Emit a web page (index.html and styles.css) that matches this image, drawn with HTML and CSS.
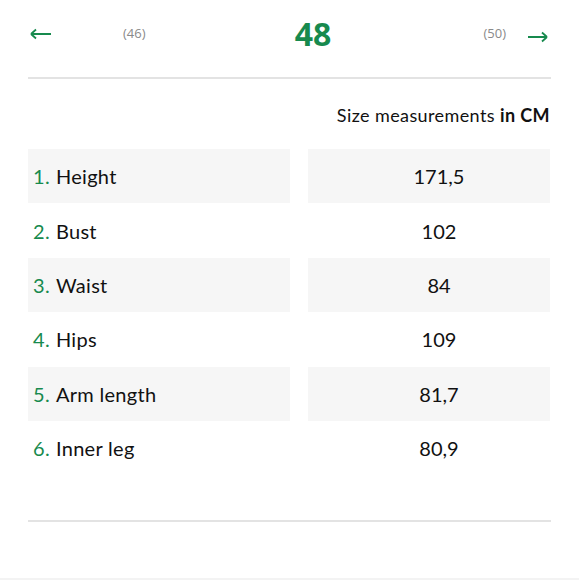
FILE: index.html
```html
<!DOCTYPE html>
<html>
<head>
<meta charset="utf-8">
<link rel="stylesheet" href="styles.css">
</head>
<body>
<div class="page">
  <div class="nav">
    <div class="side">
      <svg class="arrow" width="21" height="12" viewBox="0 0 21 12"><path d="M1 6H21M1 6L6 1.5M1 6L6 10.5" fill="none" stroke="#178a4e" stroke-width="1.8"/></svg>
      <span class="alt">(46)</span>
    </div>
    <div class="current">48</div>
    <div class="side">
      <span class="alt">(50)</span>
      <svg class="arrow right" width="20" height="12" viewBox="0 0 20 12"><path d="M0 6H19M19 6L14 1.5M19 6L14 10.5" fill="none" stroke="#178a4e" stroke-width="1.8"/></svg>
    </div>
  </div>
  <div class="rule"></div>
  <p class="caption">Size measurements <b>in CM</b></p>
  <div class="table">
    <div class="row shaded"><div class="label"><span class="num">1.</span> Height</div><div class="value">171,5</div></div>
    <div class="row"><div class="label"><span class="num">2.</span> Bust</div><div class="value">102</div></div>
    <div class="row shaded"><div class="label"><span class="num">3.</span> Waist</div><div class="value">84</div></div>
    <div class="row"><div class="label"><span class="num">4.</span> Hips</div><div class="value">109</div></div>
    <div class="row shaded"><div class="label"><span class="num">5.</span> Arm length</div><div class="value">81,7</div></div>
    <div class="row"><div class="label"><span class="num">6.</span> Inner leg</div><div class="value">80,9</div></div>
  </div>
  <div class="rule bottom"></div>
</div>
</body>
</html>
```
FILE: styles.css
```css
html, body {
  margin: 0;
  background: #fff;
}
body {
  font-family: "Lato", "Open Sans", sans-serif;
  color: #111;
  height: 580px;
  box-sizing: border-box;
  border-bottom: 2px solid #f3f3f3;
}
.page {
  padding: 0 28px 0 28px;
}
.nav {
  height: 77px;
  box-sizing: border-box;
  padding: 0 3px 9px 2px;
  display: flex;
  align-items: center;
  justify-content: space-between;
}
.side {
  display: flex;
  align-items: center;
  gap: 72px;
  width: 120px;
}
.side:last-child {
  justify-content: flex-end;
  gap: 22px;
}
.arrow { display: block; }
.arrow.right { margin-top: 6px; }
.alt {
  font-family: "Open Sans", sans-serif;
  font-size: 13px;
  line-height: 1;
  color: #8a8a8a;
  margin-top: -2px;
}
.current {
  font-family: "Open Sans", sans-serif;
  font-weight: 700;
  font-size: 32px;
  line-height: 1;
  color: #178a4e;
  margin-left: 48px;
  margin-top: 0;
}
.rule {
  height: 2px;
  background: #e3e3e3;
}
.caption {
  margin: 25px 1px 0 0;
  text-align: right;
  font-size: 18px;
  line-height: 22px;
  letter-spacing: 0.4px;
}
.caption b { font-weight: 700; }
.table {
  margin-top: 23px;
  display: flex;
  flex-direction: column;
}
.row {
  display: grid;
  grid-template-columns: 262px 242px;
  column-gap: 18px;
  height: 54.4px;
  font-size: 20px;
}
.row > div {
  display: flex;
  align-items: center;
}
.row.shaded > div {
  background: #f6f6f6;
}
.label {
  padding-left: 5px;
  letter-spacing: 0.3px;
}
.num {
  color: #178a4e;
  margin-right: 6px;
}
.value {
  justify-content: center;
  padding-left: 20px;
}
.rule.bottom {
  margin-top: 45px;
}
```
